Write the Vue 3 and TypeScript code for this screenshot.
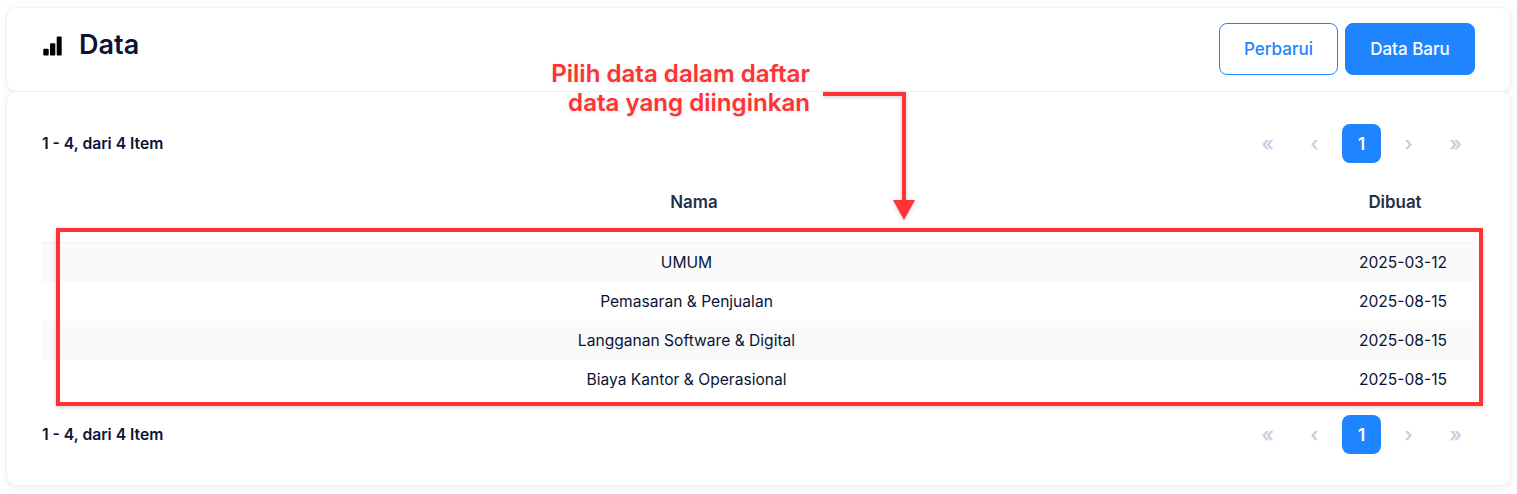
<script setup lang="ts">
interface Row { name: string; created: string }
const rows: Row[] = [
  { name: 'UMUM', created: '2025-03-12' },
  { name: 'Pemasaran & Penjualan', created: '2025-08-15' },
  { name: 'Langganan Software & Digital', created: '2025-08-15' },
  { name: 'Biaya Kantor & Operasional', created: '2025-08-15' },
]
</script>

<template>
  <div class="page">
    <header class="card head">
      <h1 class="title">
        <svg class="title-icon" viewBox="0 0 20 20" width="20" height="20" aria-hidden="true">
          <rect x="1.3" y="12.8" width="5.4" height="6.7" rx="1" fill="#000" />
          <rect x="8" y="7.2" width="5.3" height="12.3" rx="1" fill="#000" />
          <rect x="14.7" y="0.5" width="5" height="19" rx="1" fill="#000" />
        </svg>
        <span>Data</span>
      </h1>
      <div class="actions">
        <button class="btn outline">Perbarui</button>
        <button class="btn solid">Data Baru</button>
      </div>
    </header>

    <section class="card body">
      <div class="pager-row top">
        <strong class="count">1 - 4, dari 4 Item</strong>
        <nav class="pager">
          <span class="pg">«</span><span class="pg">‹</span><span class="pg on">1</span><span class="pg">›</span><span class="pg">»</span>
        </nav>
      </div>

      <div class="table">
        <div class="tr th">
          <div class="c-name">Nama</div>
          <div class="c-date">Dibuat</div>
        </div>
        <div v-for="(r, i) in rows" :key="r.name" class="tr td" :class="{ odd: i % 2 === 0 }">
          <div class="c-name">{{ r.name }}</div>
          <div class="c-date">{{ r.created }}</div>
        </div>
      </div>

      <div class="pager-row bottom">
        <strong class="count">1 - 4, dari 4 Item</strong>
        <nav class="pager">
          <span class="pg">«</span><span class="pg">‹</span><span class="pg on">1</span><span class="pg">›</span><span class="pg">»</span>
        </nav>
      </div>
    </section>

    <div class="note">Pilih data dalam daftar<br />data yang diinginkan</div>
    <div class="mark"></div>
    <svg class="arrow" width="110" height="140" viewBox="0 0 110 140" aria-hidden="true">
      <path d="M2 4 H83 V112" fill="none" stroke="#ff3333" stroke-width="4" />
      <path d="M72 110 H94 L83 130 Z" fill="#ff3333" />
    </svg>
  </div>
</template>

<style>
html, body { margin: 0; background: #fff; }
</style>

<style scoped>
.page {
  position: relative;
  width: 1517px;
  height: 494px;
  box-sizing: border-box;
  padding: 7px 6px 0 6px;
  overflow: hidden;
  font-family: Inter, "Noto Sans", sans-serif;
  color: #0b1437;
  background: #fefefe;
}
.card {
  box-sizing: border-box;
  background: #fff;
  border-radius: 10px;
  border: 1px solid #f1f1f2;
  box-shadow: 0 2px 5px rgba(0, 0, 0, 0.06);
}
.head {
  height: 85px;
  display: flex;
  justify-content: space-between;
  align-items: flex-start;
  padding: 15px 35px 0 35px;
}
.title {
  margin: 0;
  display: flex;
  align-items: center;
  gap: 17px;
  font-size: 27px;
  font-weight: 600;
  line-height: 44px;
  height: 44px;
}
.title-icon { flex: none; margin-top: 1px; }
.actions { display: flex; gap: 7px; }
.btn {
  height: 52px;
  box-sizing: border-box;
  border-radius: 8px;
  font: 500 17px Inter, sans-serif;
  border: 1px solid #1f85ff;
}
.outline { width: 119px; background: #fff; color: #1f85ff; }
.solid { width: 130px; background: #1f85ff; color: #fff; }
.body {
  height: 395px;
  margin-top: -1px;
  padding: 32px 35px 0 35px;
}
.pager-row {
  display: flex;
  justify-content: space-between;
  align-items: center;
  height: 39px;
}
.count { font-size: 15.7px; font-weight: 600; }
.top .count { margin-bottom: 1px; }
.pager { display: flex; gap: 8px; }
.pg {
  width: 39px;
  height: 39px;
  display: flex;
  align-items: center;
  justify-content: center;
  border-radius: 8px;
  color: #c9cfdf;
  font-size: 20px;
  font-weight: 600;
}
.on { background: #1f85ff; color: #fff; font-size: 17px; }
.table { margin-top: 19px; }
.tr { display: grid; grid-template-columns: 1289px 144px; text-align: center; }
.th {
  height: 61px;
  padding-top: 10px;
  font-size: 16.9px;
  font-weight: 600;
  line-height: 20px;
  color: #252f4a;
  border-bottom: 1px solid #f1f1f4;
  box-sizing: border-box;
}
.th .c-name { padding-left: 15px; }
.th .c-date { padding-right: 16px; }
.td {
  height: 39px;
  align-items: center;
  font-size: 15.6px;
  color: #0b1437;
}
.odd { background: #fafafa; }
.bottom { margin-top: 16px; }
.note {
  position: absolute;
  right: 707px;
  top: 59px;
  text-align: right;
  font-size: 24.1px;
  font-weight: 600;
  line-height: 29px;
  color: #ff3333;
  text-shadow: 0 1px 3px rgba(0, 0, 0, 0.12);
}
.mark {
  position: absolute;
  left: 56px;
  top: 228px;
  width: 1427px;
  height: 178px;
  box-sizing: border-box;
  border: 4px solid #ff3333;
  box-shadow: 0 1px 4px rgba(0, 0, 0, 0.2);
}
.arrow {
  position: absolute;
  left: 821px;
  top: 90px;
  filter: drop-shadow(0 1px 2px rgba(0, 0, 0, 0.2));
}
</style>
